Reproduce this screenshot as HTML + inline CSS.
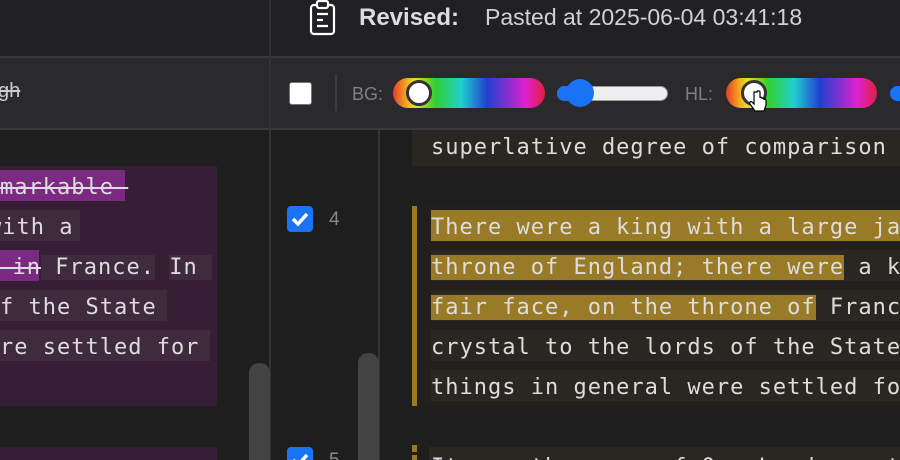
<!DOCTYPE html>
<html style="width:900px;height:460px;overflow:hidden"><head><meta charset="utf-8"><style>
*{margin:0;padding:0;box-sizing:border-box}
body{width:900px;height:460px;overflow:hidden;background:#1e1e1e;position:relative;font-family:"Liberation Sans",sans-serif}
.a{position:absolute}
.mono{font-family:"DejaVu Sans Mono","Liberation Mono",monospace;font-size:22px;letter-spacing:1px;color:#ddd;white-space:pre;line-height:31px;padding-top:2px;height:31px}
.hue{background:linear-gradient(90deg,#e53a2a 0%,#f0a020 8%,#e8e020 14%,#30d030 28%,#20d0d0 45%,#2040d0 62%,#8030d0 75%,#e020d0 87%,#e02040 100%);border-radius:15px;height:30px}
.thumb{width:26px;height:26px;border-radius:50%;background:#fff;border:3px solid #333;top:2px}
.cb{width:26px;height:26px;border-radius:4px;background:#1a73f5}
</style></head><body>
<div class="a" style="left:0;top:0;width:900px;height:56px;background:#212124"></div>
<div class="a" style="left:0;top:56px;width:900px;height:2px;background:#3a3a3d"></div>
<div class="a" style="left:0;top:58px;width:900px;height:70px;background:#2a2a2d"></div>
<div class="a" style="left:0;top:128px;width:900px;height:2px;background:#3a3a3d"></div>
<div class="a" style="left:269px;top:0;width:2px;height:460px;background:#333336"></div>
<svg class="a" style="left:308px;top:0" width="30" height="36" viewBox="0 0 30 36"><rect x="3" y="5" width="23" height="29" rx="3" fill="none" stroke="#fff" stroke-width="2.2"/><rect x="9" y="1" width="11" height="7" rx="2" fill="#212124" stroke="#fff" stroke-width="2.2"/><path d="M9 14h11M9 20h6M9 26h11" stroke="#fff" stroke-width="2.2"/></svg>
<div class="a" style="left:359px;top:4px;font-size:24px;font-weight:bold;color:#ddd">Revised:</div>
<div class="a" style="left:485px;top:4px;font-size:23px;color:#cdd3da">Pasted at 2025-06-04 03:41:18</div>
<div class="a" style="left:-2px;top:80px;font-size:20px;color:#ccc;text-decoration:line-through">gh</div>
<div class="a" style="left:289px;top:82px;width:23px;height:23px;background:#fff;border-radius:3px;border:1px solid #777"></div>
<div class="a" style="left:335px;top:74px;width:2px;height:37px;background:#3c3c40"></div>
<div class="a" style="left:352px;top:84px;font-size:18px;color:#808080">BG:</div>
<div class="a hue" style="left:393px;top:78px;width:152px"></div>
<div class="a thumb" style="left:406px;top:80px"></div>
<div class="a" style="left:557px;top:86px;width:111px;height:15px;border-radius:8px;background:#eee;border:1px solid #999"></div>
<div class="a" style="left:557px;top:86px;width:22px;height:15px;border-radius:8px;background:#1a73f5"></div>
<div class="a" style="left:566px;top:79px;width:28px;height:28px;border-radius:50%;background:#1a73f5"></div>
<div class="a" style="left:685px;top:84px;font-size:18px;color:#808080">HL:</div>
<div class="a hue" style="left:726px;top:78px;width:151px"></div>
<div class="a thumb" style="left:741px;top:80px"></div>
<div class="a" style="left:890px;top:86px;width:20px;height:15px;border-radius:8px;background:#1a73f5"></div>
<svg class="a" style="left:749px;top:90px" width="20" height="26" viewBox="0 0 20 26"><path d="M5 2v12l-2-2c-1-1-3 0-2 2l5 7h9l2-6v-5c0-1-2-1-2 0v-1c0-1-2-1-2 0v-1c0-1-2-1-2 0v-1V2c0-1.5-3-1.5-3 0z" fill="#fff" stroke="#000" stroke-width="1.2"/></svg>
<div class="a" style="left:0;top:166px;width:217px;height:240px;background:#361f35"></div>
<div class="a" style="left:0;top:447px;width:217px;height:13px;background:#361f35"></div>
<div class="a mono" style="left:0;top:170px;background:#7a2a80;width:125px;text-decoration:line-through">markable </div>
<div class="a mono" style="left:-12px;top:210px;background:#3f2a3e;width:92px">with a</div>
<div class="a" style="left:0;top:250px;width:39px;height:31px;background:#7a2a80"></div>
<div class="a mono" style="left:-16px;top:250px"><span style="text-decoration:line-through">  in</span><span style="background:#3f2a3e"> France.</span> <span style="background:#3f2a3e">In </span></div>
<div class="a mono" style="left:0;top:290px;background:#3f2a3e;width:167px">f the State</div>
<div class="a mono" style="left:0;top:330px;background:#3f2a3e;width:210px">re settled for</div>
<div class="a" style="left:249px;top:363px;width:21px;height:97px;border-radius:10px 10px 0 0;background:#434343"></div>
<div class="a" style="left:378px;top:130px;width:2px;height:330px;background:#333336"></div>
<div class="a cb" style="left:287px;top:206px"></div>
<svg class="a" style="left:287px;top:206px" width="26" height="26"><path d="M6 13l5 5 9-10" stroke="#fff" stroke-width="3.5" fill="none"/></svg>
<div class="a" style="left:329px;top:209px;font-size:19px;color:#888">4</div>
<div class="a cb" style="left:287px;top:447px"></div>
<svg class="a" style="left:287px;top:447px" width="26" height="13"><path d="M6 13l5 5 9-10" stroke="#fff" stroke-width="3.5" fill="none"/></svg>
<div class="a" style="left:329px;top:450px;font-size:19px;color:#888">5</div>
<div class="a" style="left:358px;top:353px;width:21px;height:107px;border-radius:10px 10px 0 0;background:#434343"></div>
<div class="a" style="left:412px;top:130px;width:488px;height:36px;background:#2a2622"></div>
<div class="a mono" style="left:431px;top:130px">superlative degree of comparison</div>
<div class="a" style="left:412px;top:206px;width:5px;height:200px;background:#9a7a20"></div>
<div class="a" style="left:417px;top:206px;width:483px;height:200px;background:#221f1c"></div>
<div class="a mono" style="left:431px;top:210px;background:#987a27;width:480px">There were a king with a large ja</div>
<div class="a mono" style="left:431px;top:250px;width:480px;background:#2a2622"><span style="background:#987a27">throne of England; there were</span> a k</div>
<div class="a mono" style="left:431px;top:290px;width:480px;background:#2a2622"><span style="background:#987a27">fair face, on the throne of</span> Franc</div>
<div class="a mono" style="left:431px;top:330px;width:480px;background:#2a2622">crystal to the lords of the State</div>
<div class="a mono" style="left:431px;top:370px;width:480px;background:#2a2622">things in general were settled fo</div>
<div class="a" style="left:412px;top:445px;width:5px;height:7px;background:#9a7a20"></div>
<div class="a" style="left:412px;top:455px;width:5px;height:5px;background:#9a7a20"></div>
<div class="a" style="left:429px;top:447px;width:471px;height:13px;background:#2a2622;overflow:hidden"><div class="mono" style="position:absolute;left:2px;top:3px">It was the year of Our Lord one t</div></div>
</body></html>
